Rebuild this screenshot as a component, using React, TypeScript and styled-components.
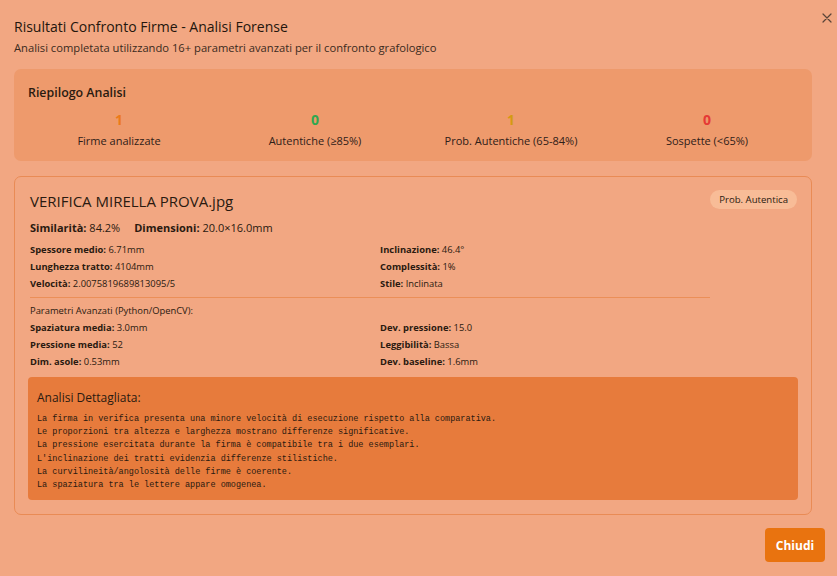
import React from "react";
import styled, { createGlobalStyle } from "styled-components";

const Global = createGlobalStyle`
  html, body { margin: 0; padding: 0; }
  body {
    background: #F2A782;
    font-family: "Segoe UI", "Open Sans", "Noto Sans", sans-serif;
    color: #2a1c14;
  }
`;

const Page = styled.div`
  position: relative;
  width: 837px;
  height: 576px;
  box-sizing: border-box;
  padding: 17px 12px 0 14px;
  display: flex;
  flex-direction: column;
`;

const CloseBtn = styled.button`
  position: absolute;
  top: 11px;
  right: 3px;
  width: 14px;
  height: 14px;
  padding: 0;
  border: none;
  background: transparent;
  display: flex;
  align-items: center;
  justify-content: center;
  color: #5a4438;
`;

const Main = styled.div`
  margin-right: 13px;
  display: flex;
  flex-direction: column;
`;

const Title = styled.h1`
  margin: 0;
  font-size: 14px;
  line-height: 20px;
  font-weight: 500;
  color: #24160d;
`;

const Subtitle = styled.p`
  margin: 3px 0 0;
  font-size: 11.2px;
  line-height: 16px;
  color: #3a2a20;
`;

const SummaryCard = styled.section`
  margin-top: 13px;
  background: #EE9A6C;
  border-radius: 7px;
  padding: 15px 14px 12px;
`;

const SummaryTitle = styled.h2`
  margin: 0;
  font-size: 12.4px;
  line-height: 18px;
  font-weight: 600;
  color: #2a1a10;
`;

const StatGrid = styled.div`
  margin-top: 9px;
  display: grid;
  grid-template-columns: repeat(4, 1fr);
  gap: 14px;
`;

const Stat = styled.div`
  display: flex;
  flex-direction: column;
  align-items: center;
  gap: 4px;
`;

const StatNum = styled.div<{ $c: string }>`
  font-size: 14px;
  line-height: 18px;
  font-weight: 700;
  color: ${(p) => p.$c};
`;

const StatLabel = styled.div`
  font-size: 11px;
  line-height: 16px;
  color: #2f2018;
`;

const ResultCard = styled.section`
  margin-top: 15px;
  border: 1px solid #E98B55;
  border-radius: 7px;
  padding: 14px 14px 14px;
`;

const TopRow = styled.div`
  display: flex;
  align-items: flex-start;
`;

const Info = styled.div`
  flex: 1;
  display: flex;
  flex-direction: column;
  padding-left: 1px;
`;

const FileName = styled.h3`
  margin: 0;
  font-size: 15px;
  line-height: 20px;
  font-weight: 400;
  color: #2a1a10;
`;

const Headline = styled.div`
  margin-top: 9px;
  display: flex;
  gap: 14px;
  font-size: 11px;
  line-height: 16px;
  color: #2a1a10;
`;

const Strong = styled.b`
  font-weight: 700;
`;

const ParamGrid = styled.div<{ $top?: number }>`
  margin-top: ${(p) => p.$top ?? 0}px;
  display: grid;
  grid-template-columns: 1fr 1fr;
  column-gap: 20px;
`;

const Param = styled.div`
  font-size: 9.4px;
  line-height: 17px;
  color: #2a1a10;
  white-space: nowrap;
`;

const Divider = styled.hr`
  margin: 5px 0 4px;
  border: none;
  border-top: 1.5px solid #EB8F58;
`;

const SectionLabel = styled.div`
  font-size: 9.4px;
  line-height: 17px;
  color: #2a1a10;
`;

const Badge = styled.span`
  flex: none;
  margin-top: -1px;
  height: 19px;
  padding: 0 9px;
  border-radius: 10px;
  background: #F8BC97;
  font-size: 9.6px;
  line-height: 19px;
  color: #2a1a10;
`;

const Detail = styled.div`
  margin: 7px -1px 0;
  background: #E77B3C;
  border-radius: 4px;
  padding: 13px 9px 8px;
`;

const DetailTitle = styled.div`
  font-size: 12px;
  line-height: 16px;
  color: #2a1a10;
`;

const Mono = styled.pre`
  margin: 7px 0 0;
  font-family: "Liberation Mono", "DejaVu Sans Mono", monospace;
  font-size: 8.5px;
  line-height: 13.2px;
  color: #2a1a10;
`;

const Footer = styled.div`
  margin-top: 13px;
  display: flex;
  justify-content: flex-end;
`;

const Button = styled.button`
  width: 60px;
  height: 34px;
  border: none;
  border-radius: 4px;
  background: #E9730F;
  color: #fff;
  font-family: inherit;
  font-size: 12px;
  font-weight: 700;
`;

const stats = [
  { n: "1", c: "#EC7A18", l: "Firme analizzate" },
  { n: "0", c: "#2FA84F", l: "Autentiche (≥85%)" },
  { n: "1", c: "#D49A12", l: "Prob. Autentiche (65-84%)" },
  { n: "0", c: "#E53935", l: "Sospette (<65%)" },
];

const base = [
  ["Spessore medio:", "6.71mm"],
  ["Inclinazione:", "46.4°"],
  ["Lunghezza tratto:", "4104mm"],
  ["Complessità:", "1%"],
  ["Velocità:", "2.0075819689813095/5"],
  ["Stile:", "Inclinata"],
];

const adv = [
  ["Spaziatura media:", "3.0mm"],
  ["Dev. pressione:", "15.0"],
  ["Pressione media:", "52"],
  ["Leggibilità:", "Bassa"],
  ["Dim. asole:", "0.53mm"],
  ["Dev. baseline:", "1.6mm"],
];

const analysis = `La firma in verifica presenta una minore velocità di esecuzione rispetto alla comparativa.
Le proporzioni tra altezza e larghezza mostrano differenze significative.
La pressione esercitata durante la firma è compatibile tra i due esemplari.
L'inclinazione dei tratti evidenzia differenze stilistiche.
La curvilineità/angolosità delle firme è coerente.
La spaziatura tra le lettere appare omogenea.`;

export default function App() {
  return (
    <>
      <Global />
      <Page>
        <CloseBtn aria-label="Chiudi">
          <svg width="12" height="12" viewBox="0 0 12 12" fill="none" stroke="currentColor" strokeWidth="1.2" strokeLinecap="round">
            <path d="M2 2 L10 10 M10 2 L2 10" />
          </svg>
        </CloseBtn>
        <Main>
          <Title>Risultati Confronto Firme - Analisi Forense</Title>
          <Subtitle>Analisi completata utilizzando 16+ parametri avanzati per il confronto grafologico</Subtitle>
          <SummaryCard>
            <SummaryTitle>Riepilogo Analisi</SummaryTitle>
            <StatGrid>
              {stats.map((s, i) => (
                <Stat key={i}>
                  <StatNum $c={s.c}>{s.n}</StatNum>
                  <StatLabel>{s.l}</StatLabel>
                </Stat>
              ))}
            </StatGrid>
          </SummaryCard>
          <ResultCard>
            <TopRow>
              <Info>
                <FileName>VERIFICA MIRELLA PROVA.jpg</FileName>
                <Headline>
                  <span><Strong>Similarità:</Strong> 84.2%</span>
                  <span><Strong>Dimensioni:</Strong> 20.0×16.0mm</span>
                </Headline>
                <ParamGrid $top={5}>
                  {base.map(([k, v]) => (
                    <Param key={k}><Strong>{k}</Strong> {v}</Param>
                  ))}
                </ParamGrid>
                <Divider />
                <SectionLabel>Parametri Avanzati (Python/OpenCV):</SectionLabel>
                <ParamGrid>
                  {adv.map(([k, v]) => (
                    <Param key={k}><Strong>{k}</Strong> {v}</Param>
                  ))}
                </ParamGrid>
              </Info>
              <Badge>Prob. Autentica</Badge>
            </TopRow>
            <Detail>
              <DetailTitle>Analisi Dettagliata:</DetailTitle>
              <Mono>{analysis}</Mono>
            </Detail>
          </ResultCard>
        </Main>
        <Footer>
          <Button>Chiudi</Button>
        </Footer>
      </Page>
    </>
  );
}
